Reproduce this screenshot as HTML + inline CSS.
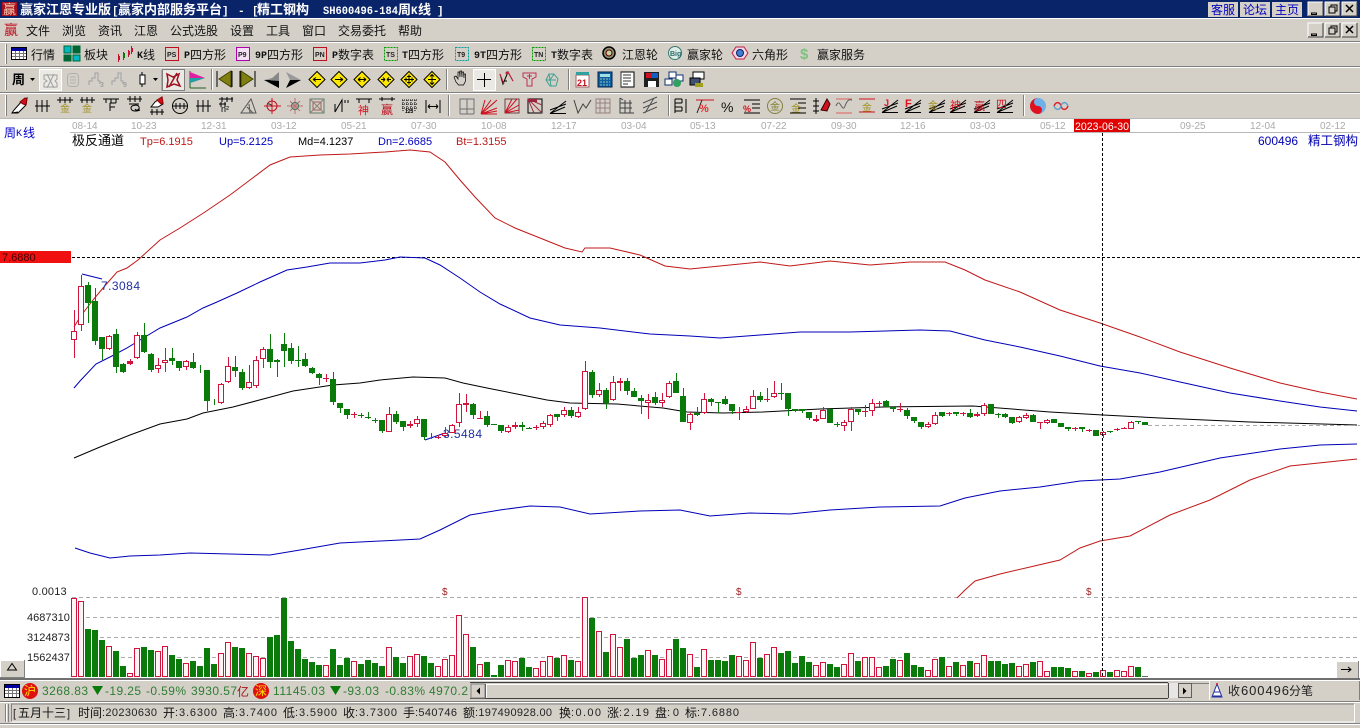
<!DOCTYPE html>
<html lang="zh"><head><meta charset="utf-8"><title>赢家江恩专业版</title>
<style>
html,body{margin:0;padding:0;background:#d4d0c8;overflow:hidden}
svg{display:block}
text{font-family:"WenQuanYi Zen Hei","Noto Sans CJK SC",sans-serif;font-size:12px;white-space:pre}
.s{font-family:"Liberation Sans",sans-serif}
.m{font-family:"Liberation Mono",monospace}
.d{font-family:"Liberation Sans",sans-serif;font-size:10px;fill:#aaa}
.n{font-family:"Liberation Sans",sans-serif;font-size:11px;fill:#222}
.g{font-family:"Liberation Sans",sans-serif;font-size:12px;fill:#2e7d32}
.i{font-family:"Liberation Sans",sans-serif;font-size:7px;font-weight:bold}
.j{font-size:10px}
</style></head><body>
<svg xmlns="http://www.w3.org/2000/svg" width="1360" height="728" viewBox="0 0 1360 728">
<defs>
<g id="fan" fill="none" stroke="#000"><path d="M-8 6.5L8-6M-8 6.5H8M-8 3L8-3M-8 6.5L7 0"/></g>
<g id="btn"><rect width="15" height="14" fill="#d4d0c8"/><path d="M0 14V0H15" fill="none" stroke="#fff"/><path d="M15 0V14H0" fill="none" stroke="#404040"/></g>
</defs>
<rect width="1360" height="728" fill="#d4d0c8"/>
<!-- title bar -->
<rect width="1360" height="18" fill="#0a246a"/>
<rect x="2" y="2" width="15" height="14" fill="#a81020"/>
<text x="3" y="14" font-size="13" fill="#f4d0b0" style="font-size:13px">赢</text>
<g fill="#fff" font-weight="bold" style="font-weight:bold">
<text x="20" y="14" style="font-size:13px" font-weight="bold">赢家江恩专业版</text>
<text x="112" y="14" class="m" style="font-size:11px" font-weight="bold">[</text>
<text x="118" y="14" style="font-size:13px" font-weight="bold">赢家内部服务平台</text>
<text x="222" y="14" class="m" style="font-size:11px" font-weight="bold">]</text>
<text x="238" y="14" class="m" style="font-size:11px" font-weight="bold">-</text>
<text x="252" y="14" class="m" style="font-size:11px" font-weight="bold">[</text>
<text x="257" y="14" style="font-size:13px" font-weight="bold">精工钢构</text>
<text x="323" y="14" class="m" style="font-size:11px" font-weight="bold" textLength="75" lengthAdjust="spacingAndGlyphs">SH600496-184</text>
<text x="398" y="14" style="font-size:13px" font-weight="bold">周</text>
<text x="411" y="14" class="m" style="font-size:11px" font-weight="bold">K</text>
<text x="418" y="14" style="font-size:13px" font-weight="bold">线</text>
<text x="437" y="14" class="m" style="font-size:11px" font-weight="bold">]</text>
</g>
<g fill="#0000c0">
<rect x="1208" y="2" width="30" height="15" fill="#d4d0c8"/><rect x="1240" y="2" width="30" height="15" fill="#d4d0c8"/><rect x="1272" y="2" width="30" height="15" fill="#d4d0c8"/>
<text x="1211" y="14">客服</text><text x="1243" y="14">论坛</text><text x="1275" y="14">主页</text>
</g>
<use href="#btn" x="1308" y="2"/><use href="#btn" x="1325" y="2"/><use href="#btn" x="1342" y="2"/>
<path d="M1311.500 13h5v1.500h-5zM1329 7h6v6h-6z" fill="none" stroke="#000"/><path d="M1331 7V5h6v6h-2" fill="none" stroke="#000"/><path d="M1346 5l7 7m0-7l-7 7" stroke="#000" stroke-width="1.500"/>
<!-- menu row -->
<path d="M0 18.500H1360" stroke="#fff"/>
<text x="4" y="35" fill="#c01020" style="font-size:14px">赢</text>
<g fill="#111">
<text x="26" y="35">文件</text><text x="62" y="35">浏览</text><text x="98" y="35">资讯</text><text x="134" y="35">江恩</text><text x="170" y="35">公式选股</text><text x="230" y="35">设置</text><text x="266" y="35">工具</text><text x="302" y="35">窗口</text><text x="338" y="35">交易委托</text><text x="398" y="35">帮助</text>
</g>
<use href="#btn" x="1308" y="23"/><use href="#btn" x="1325" y="23"/><use href="#btn" x="1342" y="23"/>
<path d="M1311.500 34h5v1.500h-5zM1329 28h6v6h-6z" fill="none" stroke="#000"/><path d="M1331 28v-2h6v6h-2" fill="none" stroke="#000"/><path d="M1346 26l7 7m0-7l-7 7" stroke="#000" stroke-width="1.500"/>
<!-- separators -->
<g shape-rendering="crispEdges">
<path d="M0 41H1360M0 66H1360M0 92H1360" stroke="#808080" stroke-width="1" transform="translate(0 .5)"/>
<path d="M0 42H1360M0 67H1360M0 93H1360" stroke="#fff" transform="translate(0 .5)"/>
<path d="M5.500 44V64M5.500 69V90M5.500 95V116" stroke="#fff"/><path d="M6.500 44V64M6.500 69V90M6.500 95V116" stroke="#808080"/>
<path d="M211.500 69V90M446.500 69V90M568.500 69V90M448.500 95V116M668.500 95V116M1023.500 95V116" stroke="#808080"/>
<path d="M212.500 69V90M447.500 69V90M569.500 69V90M449.500 95V116M669.500 95V116M1024.500 95V116" stroke="#fff"/>
</g>
<!-- toolbar 1 -->
<g fill="#111">
<text x="31" y="59">行情</text><text x="84" y="59">板块</text>
<text x="137" y="58" class="m" style="font-size:10px" font-weight="bold">K</text><text x="143" y="59">线</text>
<text x="184" y="58" class="m" style="font-size:10px" font-weight="bold">P</text><text x="190" y="59">四方形</text>
<text x="255" y="58" class="m" style="font-size:10px" font-weight="bold">9P</text><text x="267" y="59">四方形</text>
<text x="332" y="58" class="m" style="font-size:10px" font-weight="bold">P</text><text x="338" y="59">数字表</text>
<text x="402" y="58" class="m" style="font-size:10px" font-weight="bold">T</text><text x="408" y="59">四方形</text>
<text x="474" y="58" class="m" style="font-size:10px" font-weight="bold">9T</text><text x="486" y="59">四方形</text>
<text x="551" y="58" class="m" style="font-size:10px" font-weight="bold">T</text><text x="557" y="59">数字表</text>
<text x="622" y="59">江恩轮</text><text x="687" y="59">赢家轮</text><text x="752" y="59">六角形</text><text x="817" y="59">赢家服务</text>
</g>
<g shape-rendering="crispEdges">
<rect x="11.500" y="47.500" width="15" height="12" fill="#fff" stroke="#000"/><rect x="12" y="48" width="14" height="3" fill="#0000a0"/><path d="M12 53.500H26M12 56.500H26M15.500 51V59M19.500 51V59M23.500 51V59" stroke="#777"/>
<rect x="64" y="46" width="7" height="7" fill="#00b8c0" stroke="#063"/><rect x="73" y="46" width="7" height="7" fill="#063" stroke="#063"/><rect x="64" y="55" width="7" height="6" fill="#063" stroke="#063"/><rect x="73" y="55" width="7" height="6" fill="#00b8c0" stroke="#063"/>
<path d="M118.500 54v8M123.500 52v8M128.500 50v7M131.500 46v8" stroke="#c01030"/><path d="M118 56h2v4h-2zM128 51h2v4h-2zM131 48h2v4h-2z" fill="#d01030"/><path d="M123 53h2v5h-2z" fill="#0a7a0a"/>
<rect x="165.500" y="47.500" width="13" height="13" fill="none" stroke="#c01020"/><rect x="236.500" y="47.500" width="13" height="13" fill="#f4e0f4" stroke="#b000b0"/><rect x="313.500" y="47.500" width="13" height="13" fill="none" stroke="#c01020"/>
<rect x="384.500" y="47.500" width="13" height="13" fill="none" stroke="#00a000" stroke-dasharray="2 1"/><rect x="455.500" y="47.500" width="13" height="13" fill="none" stroke="#00a0a0" stroke-dasharray="2 1"/><rect x="532.500" y="47.500" width="13" height="13" fill="none" stroke="#00a000" stroke-dasharray="2 1"/>
</g>
<g fill="#222"><text x="167" y="57" class="i">PS</text><text x="238" y="57" class="i">P9</text><text x="315" y="57" class="i">PN</text><text x="386" y="57" class="i">TS</text><text x="457" y="57" class="i">T9</text><text x="534" y="57" class="i">TN</text></g>
<circle cx="609" cy="53" r="6" fill="#8a9070" stroke="#000" stroke-width="1.500"/><circle cx="609" cy="53" r="3" fill="#c8d0a0" stroke="#600"/>
<circle cx="675" cy="53" r="6.500" fill="#dfeee8" stroke="#3a7a6a"/><text x="670" y="56" class="i" fill="#2a6a6a">Big</text>
<path d="M736 47h8l4 6-4 6h-8l-4-6z" fill="#f0d8e8" stroke="#c02040"/><circle cx="740" cy="53" r="3.500" fill="#4080d0" stroke="#102060"/>
<text x="800" y="59" fill="#80c080" style="font-size:15px;font-weight:bold" class="s" font-weight="bold">$</text>
<!-- toolbar 2 -->
<text x="12" y="84" fill="#000" font-weight="bold" style="font-size:13px">周</text>
<path d="M30 78h5l-2.500 3zM153 78h5l-2.500 3z" fill="#000"/>
<rect x="39.500" y="69.500" width="22" height="21" fill="#ebe9e3" stroke="#fff"/><rect x="162.500" y="69.500" width="22" height="21" fill="#ebe9e3" stroke="#808080"/><path d="M162 70v21" stroke="#808080"/>
<path d="M44 75h13v4l-2 2 2 2v4H44v-4l3-2-3-2zM47 74l7 14M54 74l-7 14" fill="none" stroke="#a0a0a0"/>
<rect x="67.500" y="73.500" width="11" height="13" rx="3" fill="none" stroke="#b0b0a8"/><path d="M70 77h6M70 80h6M70 83h6" stroke="#b0b0a8"/>
<path d="M89 85v-4h3v-3h3v-5h3v8h2v3M112 85v-4h3v-3h3v-5h3v8h2v3" fill="none" stroke="#a0a0a0"/>
<text x="100" y="87" class="i" fill="#a0a0a0">3</text><text x="123" y="87" class="i" fill="#a0a0a0">9</text>
<path d="M142 72v3M142 84v3" stroke="#000"/><rect x="140" y="75" width="5" height="9" fill="#fff" stroke="#000"/>
<path d="M167 74l6 3 6-3-2 6 3 6-6-2-7 3 1-7zM169 87l8-14" fill="none" stroke="#a01020" stroke-width="1.500"/>
<path d="M190 71v17M190 88h16" stroke="#206020" fill="none"/><path d="M190 72l15 6-15 5z" fill="#e020a0"/><path d="M190 78l15 0-15 5z" fill="#20a0a0"/>
<path d="M217 71v16M232 71v16" stroke="#000"/><path d="M219 79l12-8v16z" fill="#808010" stroke="#404000"/>
<path d="M240 71v16M255 71v16" stroke="#000"/><path d="M253 79l-12-8v16z" fill="#808010" stroke="#404000"/>
<path d="M264 80l15-4v-4l-7 8z" fill="#999"/><path d="M264 80l15 4v4l-7-8z" fill="#000"/><path d="M279 72l-9 8 9 8z" fill="#888"/><path d="M264 80l15 1v7z" fill="#000"/>
<path d="M301 80l-15-8 4 8z" fill="#999"/><path d="M301 80l-15 8 4-8z" fill="#000"/>
<g stroke="#000" fill="#ffe800" transform="translate(317 79.500)"><path d="M0-8L8 0 0 8-8 0z"/><path d="M-4 0H4M-4 0l3-2M-4 0l3 2" fill="none"/></g>
<g stroke="#000" fill="#ffe800" transform="translate(339 79.500)"><path d="M0-8L8 0 0 8-8 0z"/><path d="M-4 0H4M4 0L1-2M4 0L1 2" fill="none"/></g>
<g stroke="#000" fill="#ffe800" transform="translate(362 79.500)"><path d="M0-8L8 0 0 8-8 0z"/><path d="M-4 0H4M4 0L1.500-2M4 0L1.500 2M-4 0l2.500-2M-4 0l2.500 2" fill="none"/></g>
<g stroke="#000" fill="#ffe800" transform="translate(386 79.500)"><path d="M0-8L8 0 0 8-8 0z"/><path d="M-5 0H-1M-1 0l-2-2M-1 0l-2 2M5 0H1M1 0l2-2M1 0l2 2" fill="none"/></g>
<g stroke="#000" fill="#ffe800" transform="translate(409 79.500)"><path d="M0-8L8 0 0 8-8 0z"/><path d="M-5 0H5M0-5V5M-2-3H2M-2 3H2M-3-2V2M3-2V2" fill="none"/></g>
<g stroke="#000" fill="#ffe800" transform="translate(432 79.500)"><path d="M0-8L8 0 0 8-8 0z"/><path d="M0-5V5M-4 0H4M-2-3L0-5 2-3M-2 3L0 5 2 3" fill="none"/></g>
<path d="M456 82l-2-5 2-1 2 3v-7l1.500 0 .5 5v-6h1.500l.5 6v-5h1.500l.5 6 0-4h1.500v7l-2 4h-5z" fill="#d4d0c8" stroke="#000" stroke-width=".7"/>
<rect x="473.500" y="69.500" width="22" height="21" fill="#ebe9e3" stroke="#fff"/><path d="M477 79.500H491M484.500 73V87" stroke="#000"/>
<path d="M500 74l3 10 5-12 5 9M504 81l3 0" fill="none" stroke="#000"/><circle cx="507" cy="73" r="1.500" fill="#c02030"/><path d="M500 74l4 10M508 72l5 9" fill="none" stroke="#d02030"/>
<path d="M523 73h13v4l-4 2v7h-5v-7l-4-2zM527 76h5M529.500 74v5" fill="none" stroke="#c03050"/>
<path d="M546 80l3-6h5l4 5-2 7h-6zM549 74l2 12M554 74l-4 6M546 80h10" fill="none" stroke="#40a090"/>
<g shape-rendering="crispEdges">
<rect x="576" y="75" width="13" height="12" fill="#fff" stroke="#a06060"/><rect x="576" y="72" width="13" height="3" fill="#30a0a0"/>
<rect x="598" y="72" width="14" height="15" fill="#1060a0" stroke="#002050"/><rect x="600" y="74" width="10" height="3" fill="#a0e0e0"/><path d="M600 79h10M600 82h10M600 85h10" stroke="#90c0c0" stroke-dasharray="2 1"/>
<rect x="621" y="72" width="13" height="15" fill="#fff" stroke="#000"/><path d="M623 75h8M623 78h8M623 81h8M623 84h5M621 72v15" stroke="#333"/>
<rect x="644" y="72" width="15" height="15" fill="#202020"/><rect x="646" y="73" width="6" height="5" fill="#d01020"/><rect x="652" y="73" width="6" height="5" fill="#1060c0"/><rect x="648" y="81" width="8" height="6" fill="#fff"/>
<rect x="669" y="72" width="7" height="6" fill="#fff" stroke="#103070"/><rect x="676" y="75" width="7" height="6" fill="#fff" stroke="#103070"/><rect x="665" y="79" width="7" height="6" fill="#fff" stroke="#103070"/>
<rect x="693" y="72" width="11" height="7" fill="#fff" stroke="#000"/><rect x="690" y="78" width="10" height="7" fill="#405070" stroke="#000"/><rect x="695" y="83" width="8" height="4" fill="#a0a020"/>
</g>
<circle cx="677" cy="83" r="4" fill="#30a060"/>
<text x="577" y="86" fill="#c01020" class="s" style="font-size:9px" font-weight="bold">21</text>
<!-- toolbar 3 -->
<g fill="none" stroke="#000">
<path d="M12 113l2-3 8-9 5-3-1 7-8 8zM12 113l6-1" fill="#fff"/><path d="M20 102l5-4 2 1-1 6-3-1z" fill="#d01020" stroke="#800"/>
<path d="M37 100v12M42 100v12M47 100v12M35 106H50"/>
<path d="M57 100H73M60 97v6M65 97v6M70 97v6"/><path d="M80 100H95M82 97v6M87 97v6M92 97v6"/>
<path d="M103 99h16M106 99v4M116 99v4M111 99v4M110 103h6M110 103v8M110 107h5"/>
<path d="M127 99h15M130 96v6M135 96v6M140 96v6M129 104h10M140 110c-5 2-9 1-9-2s7-4 8-1-3 4-4 2"/>
<path d="M150 112h14M152 109v6M157 109v6M162 109v6"/><path d="M151 107l4-5 7-5 1 7-5 3z" fill="#fff"/><path d="M157 100l5-3 1 6-2 1z" fill="#d01020" stroke="#900"/>
<circle cx="180" cy="106" r="7.500"/><path d="M173 106h15M176 103v6M180 103v6M184 103v6"/>
<path d="M196 106h15M198 100v12M203 100v12M208 100v12"/>
<path d="M219 99h14M222 97v5M227 97v5M232 97v5M219 104h7M221 102v5M225 102v5"/>
<path d="M241 113l10-14 5 14zM247 107l6 6M249 104l1 9" stroke="#555"/>
<path d="M272 98v16M264 106h17" stroke="#d01020"/><circle cx="272" cy="106" r="5" stroke="#c01020"/><path d="M272 106a5 5 0 0 0-5-2" stroke="#333"/>
<path d="M287 106h16M295 98v16M290 101l10 10M300 101l-10 10" stroke="#c07070"/><circle cx="295" cy="106" r="3.500" stroke="#407060"/>
<rect x="310" y="99" width="14" height="14" stroke="#607a70"/><rect x="313" y="102" width="8" height="8" stroke="#a06060"/><path d="M310 99l14 14M324 99l-14 14" stroke="#908070"/>
<path d="M335 112V104M335 112l7-12V112M345 100v3M348 100v3"/>
<path d="M356 99h16M359 99v4M369 99v4"/>
<path d="M379 99h16M382 97v4M392 97v4"/>
<path d="M402 100h16M403 100v12M407 100v12M411 100v12M415 100v12M402 104h16M402 108h16" stroke-dasharray="1 1"/>
<path d="M426 100v13M440 100v13M428 106.500h10M428 106.500l2-2M428 106.500l2 2M438 106.500l-2-2M438 106.500l-2 2"/>
<path d="M460 99h14v10h-14zM467 99v15M460 114h14M460 109v5M474 109v5" stroke="#707070"/>
<path d="M481 114l16-14M481 114l14-12M481 114l10-14M481 114h16M481 114l4-14M481 114l16-6M481 114l16-3" stroke="#d01020"/>
<rect x="505" y="99" width="14" height="14" stroke="#704040"/><path d="M505 113l14-8M505 113l12-14M505 113l7-14M505 113l14-3" stroke="#d01020"/>
<rect x="528" y="99" width="14" height="14" stroke="#000"/><path d="M528 99l14 14M528 99l6 14M528 99l14 6" stroke="#a03040"/><path d="M528 99h9v3h-9z" fill="#a02040" stroke="none"/>
<use href="#fan" x="558" y="107"/>
<path d="M574 100l4 13 5-9 3 4 5-8" stroke="#404040"/>
<path d="M596 99h14v14h-14zM596 103h14M596 108h14M600 99v14M605 99v14" stroke="#988080"/>
<path d="M620 98v15h14M620 103h12M620 108h12M625 100v13M630 100v13M620 98l3 2" stroke="#404040"/>
<path d="M643 103l14-6M643 108l14-6M643 113l14-6M645 113l9-15" stroke="#505050"/>
<path d="M675 99v14M675 99h7M675 103h7M675 107h7M675 111h7M682 99v4M682 107v4M686 99v14"/>
<path d="M696 100h18" stroke="#d01020"/><path d="M697 113l5-13" stroke="#202020"/>
<path d="M744 100h16M752 104h8M744 113h16M752 108h8"/>
<circle cx="775" cy="106" r="7.500" stroke="#808040"/>
<path d="M790 99h16M798 103h8M798 108h8M790 113h16"/>
<path d="M816 98v16M813 101h6M813 106h6M813 111h6"/><path d="M821 110l6-11 3 5-3 7z" fill="#d01020" stroke="#300"/>
<path d="M836 99h16M836 113h16" stroke="#e06060"/><path d="M836 106c4-10 6 8 9 0s5-6 7-6" stroke="#606060"/>
<path d="M859 99h16M859 112h16" stroke="#d01020"/>
</g>
<use href="#fan" x="890" y="106"/><use href="#fan" x="913" y="106"/><use href="#fan" x="937" y="106"/><use href="#fan" x="958" y="106"/><use href="#fan" x="982" y="106"/><use href="#fan" x="1005" y="106"/>
<g class="j">
<text x="60" y="112" fill="#a09020" style="font-size:10px">金</text><text x="82" y="112" fill="#a09020" style="font-size:10px">金</text>
<text x="221" y="112" class="s" fill="#000" style="font-size:9px">n²</text>
<text x="358" y="114" fill="#e01020" style="font-size:11px">神</text><text x="381" y="114" fill="#c01020" style="font-size:12px">赢</text>
<text x="405" y="113" class="i" fill="#000" style="font-size:5px">123</text>
<text x="699" y="112" fill="#e03030" class="s" style="font-size:11px" font-weight="bold">%</text>
<text x="721" y="112" fill="#111" class="s" style="font-size:14px">%</text>
<text x="743" y="112" fill="#d01020" class="s" style="font-size:9px" font-weight="bold">%</text>
<text x="770" y="110" fill="#808030" style="font-size:10px">金</text>
<text x="791" y="112" fill="#a09020" style="font-size:10px">金</text>
<text x="862" y="111" fill="#a09020" style="font-size:10px">金</text>
<text x="884" y="106" fill="#e01020" class="s" style="font-size:9px" font-weight="bold">J</text>
<text x="905" y="107" fill="#e01020" class="s" style="font-size:11px" font-weight="bold">F</text>
<text x="928" y="109" fill="#a09020" style="font-size:10px">金</text>
<text x="950" y="109" fill="#e01020" style="font-size:11px">神</text>
<text x="974" y="110" fill="#c01020" style="font-size:11px">赢</text>
<text x="996" y="108" fill="#d01020" style="font-size:11px">四</text>
</g>
<circle cx="1038" cy="106" r="8" fill="#70b0e8"/><path d="M1038 98a8 8 0 0 0 0 16a4 4 0 0 0 0-8a4 4 0 0 1 0-8z" fill="#e01020"/><circle cx="1038" cy="102" r="1.500" fill="#70b0e8"/><circle cx="1038" cy="110" r="1.500" fill="#e01020"/>
<path d="M1054 106c2-5 6-4 7 0s5 5 7 0" fill="none" stroke="#e02030" stroke-width="1.500"/><path d="M1054 106c2 5 6 4 7 0s5-5 7 0" fill="none" stroke="#60a0d0" stroke-width="1.500"/>
<!-- chart area -->
<rect x="0" y="119" width="1360" height="559" fill="#fff"/>
<path d="M70 132.500H1360M0 118.500H1360" stroke="#b8b8b8" shape-rendering="crispEdges"/>
<g class="d">
<text class="d" x="72" y="129">08-14</text><text class="d" x="131" y="129">10-23</text><text class="d" x="201" y="129">12-31</text><text class="d" x="271" y="129">03-12</text><text class="d" x="341" y="129">05-21</text><text class="d" x="411" y="129">07-30</text><text class="d" x="481" y="129">10-08</text><text class="d" x="551" y="129">12-17</text><text class="d" x="621" y="129">03-04</text><text class="d" x="690" y="129">05-13</text><text class="d" x="761" y="129">07-22</text><text class="d" x="831" y="129">09-30</text><text class="d" x="900" y="129">12-16</text><text class="d" x="970" y="129">03-03</text><text class="d" x="1040" y="129">05-12</text><text class="d" x="1180" y="129">09-25</text><text class="d" x="1250" y="129">12-04</text><text class="d" x="1320" y="129">02-12</text>
</g>
<rect x="1074" y="119" width="56" height="13" fill="#e00000"/><text x="1075" y="130" fill="#fff" class="s" style="font-size:11px" textLength="54" lengthAdjust="spacingAndGlyphs">2023-06-30</text>
<text x="4" y="137" fill="#0000c8">周</text><text x="16" y="136" fill="#0000c8" class="m" style="font-size:10px">K</text><text x="23" y="137" fill="#0000c8">线</text>
<text x="72" y="145" fill="#000" style="font-size:13px">极反通道</text>
<text x="140" y="145" class="s" fill="#c01818" style="font-size:11px">Tp=6.1915</text><text x="219" y="145" class="s" fill="#0000c0" style="font-size:11px">Up=5.2125</text><text x="298" y="145" class="s" fill="#000" style="font-size:11px">Md=4.1237</text><text x="378" y="145" class="s" fill="#0000c0" style="font-size:11px">Dn=2.6685</text><text x="456" y="145" class="s" fill="#c01818" style="font-size:11px">Bt=1.3155</text>
<text x="1258" y="145" class="s" fill="#0000b0">600496</text><text x="1308" y="145" fill="#0000b0" style="font-size:12.500px">精工钢构</text>
<rect x="0" y="251" width="71" height="12" fill="#f01010"/><text x="2" y="261" class="s" style="font-size:11px" fill="#400">7.6880</text>
<path d="M72 257.500H1360" stroke="#000" stroke-dasharray="3 2" shape-rendering="crispEdges"/>
<!-- volume grid -->
<path d="M72 597.500H1360M72 617.500H1360M72 637.500H1360M72 657.500H1360" stroke="#aaa" stroke-dasharray="4 3" shape-rendering="crispEdges"/>
<text class="n" x="32" y="595" fill="#333" style="letter-spacing:.2px">0.0013</text><text class="n" x="27" y="621">4687310</text><text class="n" x="27" y="641">3124873</text><text class="n" x="27" y="661">1562437</text>
<g class="s" fill="#900"><text x="442" y="595" class="s" fill="#a02020" style="font-size:10px">$</text><text x="736" y="595" class="s" fill="#a02020" style="font-size:10px">$</text><text x="1086" y="595" class="s" fill="#a02020" style="font-size:10px">$</text></g>
<!-- channel lines -->
<g fill="none" stroke-width="1">
<polyline stroke="#c01818" points="74,327 80,317 93,300 103,288 117,272 127,268 138,260 160,240 180,228 205,212 230,195 250,180 270,165 290,157 320,155 350,154 385,152 410,150 430,152 445,162 460,180 475,197 495,218 515,228 540,238 565,248 582,252 585,248 610,248 640,255 665,266 690,269 720,266 760,262 790,266 830,261 870,265 910,262 945,262 965,270 985,280 1020,292 1060,310 1100,323 1140,337 1180,352 1230,368 1280,383 1320,392 1357,399"/>
<polyline stroke="#0000b8" points="74,388 80,381 96,364 110,357 127,348 140,340 160,328 187,317 203,308 217,302 237,293 260,282 287,270 307,267 330,263 360,263 385,260 400,257 425,258 440,265 460,278 480,292 500,304 530,318 560,325 600,328 650,334 690,336 720,338 760,335 800,332 850,332 920,330 950,331 985,340 1020,347 1060,356 1100,366 1140,373 1180,382 1230,393 1280,401 1320,407 1357,411"/>
<polyline stroke="#000" points="74,458 100,447 130,435 160,424 187,419 203,413 233,407 267,398 293,391 333,385 360,383 380,380 413,377 445,378 463,383 487,388 517,394 547,400 570,403 617,404 663,408 687,412 723,413 763,412 820,409 883,407 973,406 1050,412 1103,415 1160,418 1250,422 1357,425"/>
<polyline stroke="#0000b8" points="75,548 90,553 110,558 130,556 160,555 190,553 230,554 270,555 300,550 340,543 380,541 420,539 440,530 470,515 500,510 530,506 560,507 590,514 640,511 680,510 710,516 750,513 790,514 830,510 880,507 940,506 965,498 1000,491 1040,487 1080,481 1120,479 1160,472 1220,458 1280,449 1320,445 1357,444"/>
<polyline stroke="#c01818" points="957,598 965,590 975,581 1000,574 1030,567 1060,560 1080,548 1100,541 1130,536 1170,515 1210,500 1250,480 1290,466 1357,459"/>
<polyline stroke="#0000b8" points="82,274 102,279"/>
<polyline stroke="#0000b8" points="425,440 445,433"/>
</g>
<text x="101" y="290" class="s" style="font-size:12px" fill="#2030a0" textLength="39">7.3084</text>
<text x="443" y="438" class="s" style="font-size:12px" fill="#2030a0" textLength="39">3.5484</text>
<path d="M1148 425.500H1360" stroke="#aaa" stroke-dasharray="4 3" shape-rendering="crispEdges"/>
<!-- candles -->
<g shape-rendering="crispEdges" fill="none">
<path transform="translate(.5 0)" stroke="#0a7a0a" d="M88 282V323M95 288V345M102 337V360M116 329V373M123 363V373M144 323V353M151 353V372M172 348V365M179 361V371M193 353V369M200 365V373M207 370V411M214 399V405M235 356V377M242 369V390M270 334V368M277 359V377M284 333V367M291 343V364M298 346V367M305 353V367M312 367V374M319 373V385M333 372V405M340 403V413M347 409V419M361 413V418M368 412V419M375 418V423M382 420V433M396 411V424M403 421V431M424 419V440M431 433V439M473 403V419M487 411V427M494 424V425M501 425V433M522 422V431M529 427V429M557 414V421M571 407V418M592 370V398M606 388V409M627 378V395M634 388V397M641 395V414M655 392V405M676 373V393M683 388V422M697 407V416M711 398V406M718 402V413M725 396V405M732 404V414M760 392V402M781 383V400M788 393V416M795 409V412M802 409V413M809 412V420M830 409V423M837 422V427M858 409V415M886 400V407M893 407V412M907 408V419M914 417V423M921 422V429M942 412V417M956 412V416M970 409V418M991 404V414M998 413V418M1005 413V418M1012 417V424M1033 414V422M1054 419V423M1061 423V427M1068 427V431M1082 427V432M1096 430V436M1110 431V433M1138 421V424M1145 422V425"/>
<path stroke="#0a7a0a" stroke-width="6" d="M88 285V303M95 301V341M102 337V349M116 334V367M123 364V372M144 335V352M151 354V370M172 358V361M179 361V368M193 362V368M207 370V401M235 367V371M242 372V388M270 349V362M277 360V362M284 344V351M291 348V361M298 360V361M305 359V366M312 368V373M319 374V378M333 379V402M340 403V408M347 409V415M361 415V416M368 417V418M375 420V421M382 420V431M396 414V422M403 421V427M424 419V437M473 404V415M487 416V425M494 424V425M501 425V431M522 425V427M529 428V429M557 414V417M571 410V416M592 372V395M606 390V403M627 381V391M634 391V397M641 398V401M655 397V403M676 381V393M683 396V422M697 413V415M711 399V402M718 402V403M725 399V404M732 404V411M760 396V400M781 393V394M788 393V409M795 409V411M802 409V411M809 412V418M830 409V423M837 424V425M858 409V412M886 401V407M893 407V409M907 410V416M914 417V421M921 422V427M942 412V416M956 412V414M970 413V417M991 404V414M998 414V415M1005 414V417M1012 417V423M1033 415V422M1054 419V423M1061 423V427M1068 427V429M1082 427V429M1096 430V436M1110 431V432M1138 421V422M1145 422V425"/>
<path transform="translate(.5 0)" stroke="#d0143c" d="M74 310V358M81 275V331M109 335V350M130 359V365M137 332V359M158 358V373M165 348V372M186 360V370M221 383V404M228 357V383M249 365V389M256 356V388M263 347V368M326 374V382M354 412V418M389 407V432M410 421V428M417 416V427M438 435V439M445 427V437M452 424V433M459 393V427M466 394V412M480 411V419M508 425V433M515 422V429M536 425V430M543 421V429M550 414V427M564 407V417M578 407V418M585 361V410M599 383V397M613 376V401M620 378V391M648 394V419M662 393V407M669 381V398M690 412V430M704 393V414M739 407V420M746 406V413M753 390V409M767 388V402M774 381V398M816 415V422M823 407V419M844 420V431M851 407V431M865 405V417M872 399V416M879 401V408M900 403V412M928 422V428M935 412V425M949 412V416M963 412V416M977 412V417M984 403V416M1019 416V423M1026 413V419M1040 422V429M1047 419V424M1075 427V431M1089 429V432M1103 431V438M1117 428V431M1124 427V429M1131 421V429"/>
<path stroke="#d0143c" stroke-width="6" d="M74 331V340M81 286V325M109 336V349M130 361V364M137 335V358M158 365V369M165 360V363M186 361V367M221 384V403M228 366V382M249 382V388M256 360V386M263 349V359M326 378V379M354 414V415M389 414V432M410 424V426M417 419V424M438 437V438M445 433V436M452 425V433M459 404V423M466 403V405M480 418V419M508 427V432M515 425V427M536 427V428M543 423V427M550 415V425M564 410V415M578 412V417M585 371V409M599 390V395M613 382V400M620 381V383M648 400V403M662 400V403M669 383V397M690 414V423M704 399V413M739 412V413M746 409V412M753 396V409M767 399V400M774 393V397M816 419V421M823 410V419M844 422V426M851 409V422M865 411V412M872 403V411M879 403V404M900 409V410M928 424V427M935 415V424M949 413V414M963 413V414M977 414V416M984 405V414M1019 417V422M1026 415V418M1040 422V423M1047 420V423M1075 428V429M1089 430V431M1103 432V435M1117 429V430M1124 428V429M1131 422V429"/>
<path stroke="#fff" stroke-width="4" d="M74 332V339M81 287V324M109 337V348M137 336V357M158 366V368M165 361V362M186 362V366M221 385V402M228 367V381M249 383V387M256 361V385M263 350V358M389 415V431M417 420V423M445 434V435M452 426V432M459 405V422M508 428V431M543 424V426M550 416V424M564 411V414M578 413V416M585 372V408M599 391V394M613 383V399M648 401V402M662 401V402M669 384V396M690 415V422M704 400V412M746 410V411M753 397V408M774 394V396M823 411V418M844 423V425M851 410V421M872 404V410M928 425V426M935 416V423M984 406V413M1019 418V421M1026 416V417M1047 421V422M1103 433V434M1131 423V428"/>
<!-- volume -->
<path stroke="#0a7a0a" stroke-width="6" d="M88 629V677M95 630V677M102 640V677M116 651V677M123 666V677M144 647V677M151 650V677M172 655V677M179 659V677M193 661V677M200 666V677M207 648V677M214 664V677M235 647V677M242 648V677M270 637V677M277 635V677M284 598V677M291 641V677M298 649V677M305 659V677M312 662V677M319 665V677M333 649V677M340 665V677M347 658V677M361 664V677M368 660V677M375 663V677M382 666V677M396 657V677M403 663V677M424 656V677M431 663V677M473 647V677M487 662V677M494 675V677M501 665V677M522 658V677M529 667V677M557 658V677M571 660V677M592 618V677M606 652V677M627 639V677M634 658V677M641 655V677M655 655V677M676 639V677M683 648V677M697 667V677M711 660V677M718 660V677M725 661V677M732 655V677M760 658V677M781 653V677M788 651V677M795 663V677M802 656V677M809 662V677M830 664V677M837 667V677M858 661V677M886 666V677M893 659V677M907 653V677M914 665V677M921 667V677M942 657V677M956 662V677M970 661V677M991 661V677M998 661V677M1005 664V677M1012 663V677M1033 662V677M1054 667V677M1061 667V677M1068 668V677M1082 671V677M1096 672V677M1110 672V677M1138 667V677"/>
<path stroke="#607060" d="M1142 676.500H1148"/>
<path stroke="#d0143c" stroke-width="6" d="M74 598V677M81 601V677M109 646V677M130 673V677M137 648V677M158 651V677M165 646V677M186 663V677M221 653V677M228 642V677M249 653V677M256 656V677M263 658V677M326 665V677M354 661V677M389 647V677M410 656V677M417 654V677M438 666V677M445 659V677M452 655V677M459 615V677M466 634V677M480 664V677M508 660V677M515 661V677M536 668V677M543 661V677M550 656V677M564 655V677M578 661V677M585 597V677M599 631V677M613 634V677M620 647V677M648 650V677M662 659V677M669 649V677M690 654V677M704 649V677M739 656V677M746 660V677M753 642V677M767 654V677M774 647V677M816 665V677M823 662V677M844 664V677M851 653V677M865 657V677M872 657V677M879 667V677M900 660V677M928 670V677M935 659V677M949 666V677M963 665V677M977 663V677M984 655V677M1019 666V677M1026 664V677M1040 661V677M1047 671V677M1075 671V677M1089 673V677M1103 670V677M1117 670V677M1124 671V677M1131 666V677"/>
<path stroke="#fff5f5" stroke-width="4" d="M74 599V676M81 602V676M109 647V676M130 674V676M137 649V676M158 652V676M165 647V676M186 664V676M221 654V676M228 643V676M249 654V676M256 657V676M263 659V676M326 666V676M354 662V676M389 648V676M410 657V676M417 655V676M438 667V676M445 660V676M452 656V676M459 616V676M466 635V676M480 665V676M508 661V676M515 662V676M536 669V676M543 662V676M550 657V676M564 656V676M578 662V676M585 598V676M599 632V676M613 635V676M620 648V676M648 651V676M662 660V676M669 650V676M690 655V676M704 650V676M739 657V676M746 661V676M753 643V676M767 655V676M774 648V676M816 666V676M823 663V676M844 665V676M851 654V676M865 658V676M872 658V676M879 668V676M900 661V676M928 671V676M935 660V676M949 667V676M963 666V676M977 664V676M984 656V676M1019 667V676M1026 665V676M1040 662V676M1047 672V676M1075 672V676M1089 674V676M1103 671V676M1117 671V676M1124 672V676M1131 667V676"/>
<path d="M1102.500 133V677" stroke="#000" stroke-dasharray="3 2"/>
</g>
<!-- chart side buttons -->
<g shape-rendering="crispEdges">
<rect x="0" y="660" width="24" height="18" fill="#d4d0c8"/><path d="M0 660.500H24M.5 660V678" stroke="#fff"/><path d="M24.500 660V678M0 677.500H24" stroke="#808080"/>
<rect x="1336" y="661" width="22" height="17" fill="#d4d0c8"/><path d="M1336 661.500H1358M1336.500 661V678" stroke="#fff"/><path d="M1358.500 661V678" stroke="#808080"/>
</g>
<path d="M7.500 670h9L12 663.500z" fill="none" stroke="#000"/>
<path d="M1341 669.500h10M1348 667l3 2.500-3 2.500" fill="none" stroke="#000"/>
<!-- status rows -->
<g shape-rendering="crispEdges">
<rect x="0" y="678" width="1360" height="50" fill="#d4d0c8"/>
<path d="M0 678.500H1360M0 679.500H1360" stroke="#707070"/>
<path d="M0 680.500H1360" stroke="#fff"/>
<path d="M0 701.500H1360" stroke="#808080"/><path d="M0 702.500H1360" stroke="#fff"/>
<path d="M0 723.500H1360" stroke="#808080"/><path d="M0 724.500H1360" stroke="#fff"/>
<path d="M5.500 704V722M8.500 704V722" stroke="#808080"/><path d="M6.500 704V722" stroke="#fff"/>
<path d="M11.500 722V704H1354" fill="none" stroke="#808080"/><path d="M1354.500 704V722H11" fill="none" stroke="#fff"/>
<rect x="4.500" y="684.500" width="15" height="13" fill="#fff" stroke="#000"/><rect x="5" y="685" width="14" height="3" fill="#0000a0"/><path d="M5 690.500H19M5 693.500H19M8.500 688V697M12.500 688V697M16.500 688V697" stroke="#777"/>
<rect x="470" y="683" width="698" height="15" fill="#d4d0c8"/>
<path d="M470 682.500H1168M470 698.500H1168" stroke="#404040"/>
<path d="M485.500 684V698M1168.500 683V698" stroke="#404040"/>
<path d="M486 684.500H1167M486.500 684V698" stroke="#fff"/>
<rect x="1169" y="683" width="9" height="15" fill="#e8e6e2"/>
<rect x="471" y="684" width="14" height="14" fill="#d4d0c8" stroke="#808080"/>
<rect x="1178.500" y="683.500" width="13" height="14" fill="#d4d0c8" stroke="#606060"/>
<path d="M1209.500 681V700" stroke="#fff"/>
<path d="M1192 683.500H1209" stroke="#808080"/>
<path d="M1359.500 681V700" stroke="#808080"/>
</g>
<path d="M480 687.500v7l-3.500-3.500zM1183 687.500v7l3.500-3.500z" fill="#000"/>
<circle cx="30" cy="691" r="8" fill="#e01010"/><circle cx="261" cy="691" r="8" fill="#e01010"/>
<text x="24" y="695" fill="#ffe000">沪</text><text x="255" y="695" fill="#ffe000">深</text>
<text class="g" x="42" y="695" textLength="46">3268.83</text>
<path d="M92 686h11l-5.500 9z" fill="#0a7a0a"/>
<text class="g" x="105" y="695" textLength="36">-19.25</text>
<text class="g" x="146" y="695" textLength="40">-0.59%</text>
<text class="g" x="191" y="695" textLength="46">3930.57</text>
<text x="237" y="696" fill="#a01818">亿</text>
<text class="g" x="273" y="695" textLength="52">11145.03</text>
<path d="M330 686h11l-5.500 9z" fill="#0a7a0a"/>
<text class="g" x="343" y="695" textLength="36">-93.03</text>
<text class="g" x="385" y="695" textLength="40">-0.83%</text>
<text class="g" x="429" y="695" textLength="39">4970.2</text>
<path d="M1217 684l-5 13h10z" fill="#fff" stroke="#2030a0"/><path d="M1214 692h6M1213 696h8" stroke="#2030a0"/><circle cx="1217" cy="684" r="1" fill="#d02020"/>
<text x="1228" y="695" fill="#222">收</text><text x="1241" y="695" class="n" style="font-size:13px" textLength="48">600496</text><text x="1289" y="695" fill="#222">分笔</text>
<g fill="#111">
<text x="13" y="717" class="n">[</text><text x="18" y="717">五月十三</text><text x="67" y="717" class="n">]</text>
<text x="78" y="717">时间</text><text x="102" y="716" class="n" textLength="55">:20230630</text>
<text x="163" y="717">开</text><text x="175" y="716" class="n" textLength="42">:3.6300</text>
<text x="223" y="717">高</text><text x="235" y="716" class="n" textLength="42">:3.7400</text>
<text x="283" y="717">低</text><text x="295" y="716" class="n" textLength="42">:3.5900</text>
<text x="343" y="717">收</text><text x="355" y="716" class="n" textLength="42">:3.7300</text>
<text x="403" y="717">手</text><text x="415" y="716" class="n" textLength="42">:540746</text>
<text x="463" y="717">额</text><text x="475" y="716" class="n" textLength="77">:197490928.00</text>
<text x="559" y="717">换</text><text x="571" y="716" class="n" textLength="30">:0.00</text>
<text x="607" y="717">涨</text><text x="619" y="716" class="n" textLength="30">:2.19</text>
<text x="655" y="717">盘</text><text x="667" y="716" class="n" textLength="12">:0</text>
<text x="685" y="717">标</text><text x="697" y="716" class="n" textLength="42">:7.6880</text>
</g>
</svg>
</body></html>
